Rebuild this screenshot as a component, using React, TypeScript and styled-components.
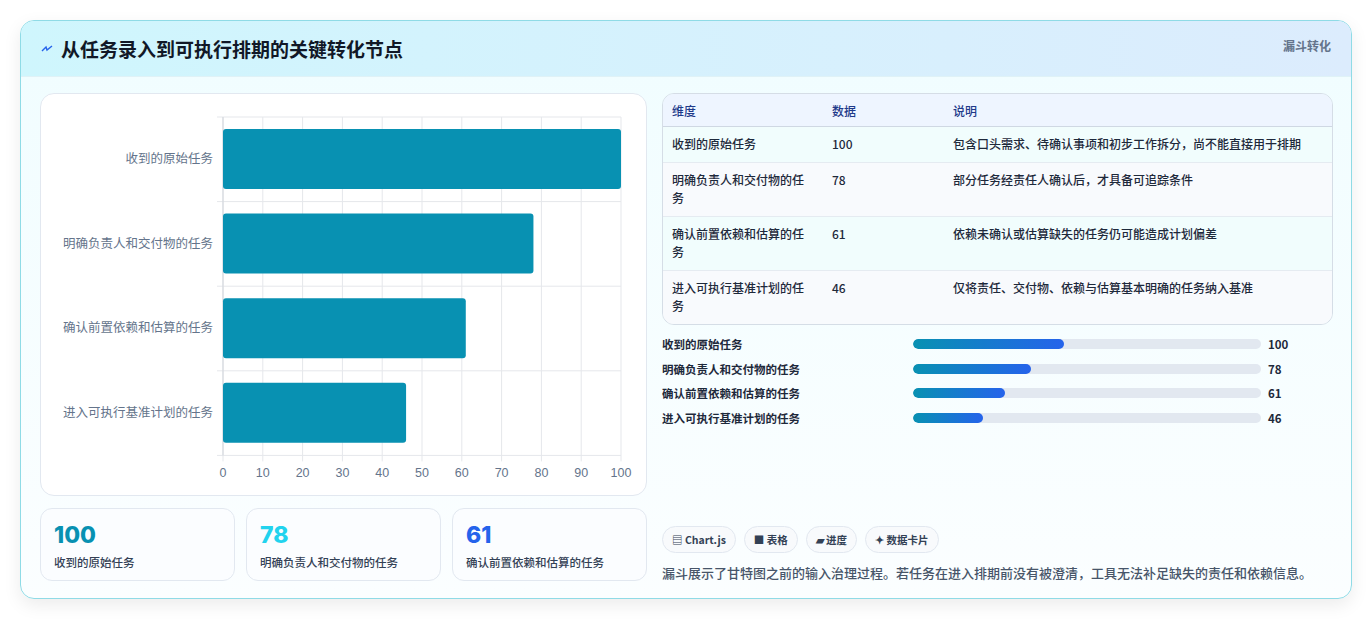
import React from "react";
import styled, { createGlobalStyle } from "styled-components";

const GlobalStyle = createGlobalStyle`
  body {
    margin: 0;
    background: #f1f2f4;
    font-family: "Noto Sans CJK SC", "Noto Sans", sans-serif;
  }
`;

const rows = [
  { name: "收到的原始任务", value: 100, note: "包含口头需求、待确认事项和初步工作拆分，尚不能直接用于排期" },
  { name: "明确负责人和交付物的任务", value: 78, note: "部分任务经责任人确认后，才具备可追踪条件" },
  { name: "确认前置依赖和估算的任务", value: 61, note: "依赖未确认或估算缺失的任务仍可能造成计划偏差" },
  { name: "进入可执行基准计划的任务", value: 46, note: "仅将责任、交付物、依赖与估算基本明确的任务纳入基准" },
];

const Page = styled.div`
  padding: 20px;
  background: #fff;
  height: 620px;
  box-sizing: border-box;
`;

const Card = styled.div`
  border: 1px solid #8fdbe6;
  border-radius: 14px;
  background: linear-gradient(180deg, #f0fdff 0%, #fbfeff 100%);
  box-shadow: 0 6px 18px rgba(0, 0, 0, 0.08);
  overflow: hidden;
  height: 579px;
  box-sizing: border-box;
  display: flex;
  flex-direction: column;
`;

const Header = styled.div`
  height: 55px;
  flex-shrink: 0;
  display: flex;
  align-items: center;
  justify-content: space-between;
  padding: 0 20px;
  background: linear-gradient(90deg, #cff6fd 0%, #dcecfd 100%);
  border-bottom: 1px solid #dff2f7;
`;

const Title = styled.h2`
  margin: 0;
  font-size: 19px;
  font-weight: 700;
  color: #111827;
  display: flex;
  align-items: center;
  gap: 8px;
`;

const Tag = styled.span`
  font-size: 12px;
  font-weight: 700;
  color: #64748b;
  align-self: flex-start;
  margin-top: 16px;
`;

const Body = styled.div`
  flex: 1;
  display: grid;
  grid-template-columns: 607px 671px;
  gap: 15px;
  padding: 16px 19px 0 19px;
`;

const Col = styled.div`
  display: flex;
  flex-direction: column;
`;

const ChartPanel = styled.div`
  height: 403px;
  box-sizing: border-box;
  border: 1px solid #e2e8f0;
  border-radius: 14px;
  background: #fff;
`;

const Stats = styled.div`
  display: grid;
  grid-template-columns: repeat(3, 1fr);
  gap: 11px;
  margin-top: 12px;
`;

const Stat = styled.div`
  height: 73px;
  box-sizing: border-box;
  border: 1px solid #e2e8f0;
  border-radius: 12px;
  background: #fbfdff;
  padding: 12px 13px;
`;

const StatNum = styled.div<{ $c: string }>`
  font-family: "Inter", "Liberation Sans", sans-serif;
  font-size: 23px;
  font-weight: 800;
  color: ${(p) => p.$c};
  line-height: 28px;
`;

const StatLabel = styled.div`
  font-size: 11.5px;
  font-weight: 500;
  color: #334155;
  margin-top: 5px;
`;

const Table = styled.table`
  width: 100%;
  table-layout: fixed;
  border-collapse: separate;
  border-spacing: 0;
  border: 1px solid #d5dde6;
  border-radius: 12px;
  overflow: hidden;
  font-size: 12px;
  font-weight: 500;
  color: #1e293b;
  th {
    text-align: left;
    background: #eef5ff;
    color: #1e3a8a;
    font-weight: 500;
    height: 32px;
    padding: 0 9px;
    border-bottom: 1px solid #cfd8e3;
  }
  td {
    padding: 8px 9px 9px;
    line-height: 18px;
    vertical-align: top;
    border-top: 1px solid #e5ebf1;
  }
  tbody tr:first-child td {
    border-top: none;
  }
  tbody tr:nth-child(odd) td {
    background: #f1fdfd;
  }
  tbody tr:nth-child(even) td {
    background: #f8fafd;
  }
`;

const Bars = styled.div`
  display: flex;
  flex-direction: column;
  gap: 8px;
  margin-top: 11px;
`;

const BarRow = styled.div`
  display: grid;
  grid-template-columns: 244px 348px 1fr;
  align-items: center;
  gap: 7px;
  font-size: 11.5px;
  font-weight: 700;
  color: #1e293b;
  height: 16.5px;
`;

const Track = styled.div`
  height: 10px;
  border-radius: 6px;
  background: #e2e8f0;
  overflow: hidden;
`;

const Fill = styled.div`
  height: 100%;
  border-radius: 6px;
  background: linear-gradient(90deg, #0891b2, #2563eb);
`;

const Chips = styled.div`
  display: flex;
  gap: 8px;
  margin-top: auto;
`;

const Chip = styled.span`
  font-size: 10.5px;
  font-weight: 700;
  color: #334155;
  border: 1px solid #e2e8f0;
  background: #f8fafc;
  border-radius: 14px;
  padding: 5px 9px;
`;

const Note = styled.p`
  margin: 10px 0 0;
  font-size: 13px;
  font-weight: 500;
  color: #475569;
  padding-bottom: 16px;
`;

function FunnelChart() {
  const x0 = 182;
  const x1 = 580;
  const yTop = 23;
  const band = 84.6;
  const w = x1 - x0;
  return (
    <svg width="606" height="401" style={{ display: "block" }}>
      {Array.from({ length: 11 }, (_, i) => {
        const x = x0 + (w * i) / 10;
        return (
          <g key={i}>
            <line x1={x} x2={x} y1={yTop} y2={yTop + band * 4 + 6} stroke="#e5e7eb" />
            <text x={x} y={383} textAnchor="middle" fontSize="12.5" fill="#64748b" fontFamily="Liberation Sans, sans-serif">
              {i * 10}
            </text>
          </g>
        );
      })}
      {[0, 1, 2, 3, 4].map((i) => (
        <line key={i} x1={x0 - 6} x2={x1} y1={yTop + band * i} y2={yTop + band * i} stroke="#e5e7eb" />
      ))}
      <line x1={x0} x2={x0} y1={yTop} y2={yTop + band * 4} stroke="#d1d5db" />
      {rows.map((r, i) => {
        const y = yTop + band * i + 12;
        return (
          <g key={r.name}>
            <rect x={x0} y={y} width={(w * r.value) / 100} height={60} rx={3} fill="#0891b2" />
            <text x={x0 - 10} y={y + 34} textAnchor="end" fontSize="12.5" fill="#64748b">
              {r.name}
            </text>
          </g>
        );
      })}
    </svg>
  );
}

export default function App() {
  return (
    <Page>
      <GlobalStyle />
      <Card>
        <Header>
          <Title>
            <svg width="12" height="10" viewBox="0 0 12 10">
              <path d="M1 7 L5 3 L6 6 L11 2" stroke="#2563eb" strokeWidth="1.4" fill="none" />
            </svg>
            从任务录入到可执行排期的关键转化节点
          </Title>
          <Tag>漏斗转化</Tag>
        </Header>
        <Body>
          <Col>
            <ChartPanel>
              <FunnelChart />
            </ChartPanel>
            <Stats>
              <Stat>
                <StatNum $c="#0891b2">100</StatNum>
                <StatLabel>收到的原始任务</StatLabel>
              </Stat>
              <Stat>
                <StatNum $c="#22d3ee">78</StatNum>
                <StatLabel>明确负责人和交付物的任务</StatLabel>
              </Stat>
              <Stat>
                <StatNum $c="#2563eb">61</StatNum>
                <StatLabel>确认前置依赖和估算的任务</StatLabel>
              </Stat>
            </Stats>
          </Col>
          <Col>
            <Table>
              <colgroup>
                <col style={{ width: 160 }} />
                <col style={{ width: 121 }} />
                <col />
              </colgroup>
              <thead>
                <tr>
                  <th>维度</th>
                  <th>数据</th>
                  <th>说明</th>
                </tr>
              </thead>
              <tbody>
                {rows.map((r) => (
                  <tr key={r.name}>
                    <td>{r.name}</td>
                    <td>{r.value}</td>
                    <td>{r.note}</td>
                  </tr>
                ))}
              </tbody>
            </Table>
            <Bars>
              {rows.map((r) => (
                <BarRow key={r.name}>
                  <span>{r.name}</span>
                  <Track>
                    <Fill style={{ width: `${r.value * 0.435}%` }} />
                  </Track>
                  <span>{r.value}</span>
                </BarRow>
              ))}
            </Bars>
            <Chips>
              <Chip>▤ Chart.js</Chip>
              <Chip>■ 表格</Chip>
              <Chip>▰ 进度</Chip>
              <Chip>✦ 数据卡片</Chip>
            </Chips>
            <Note>漏斗展示了甘特图之前的输入治理过程。若任务在进入排期前没有被澄清，工具无法补足缺失的责任和依赖信息。</Note>
          </Col>
        </Body>
      </Card>
    </Page>
  );
}
